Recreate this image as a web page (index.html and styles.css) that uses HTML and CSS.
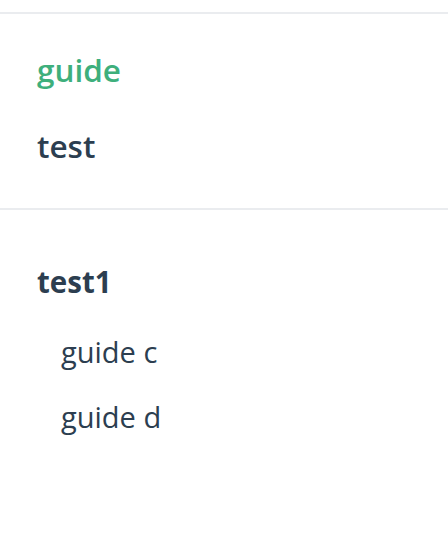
FILE: index.html
```html
<!DOCTYPE html>
<html>
<head>
<meta charset="utf-8">
<link rel="stylesheet" href="styles.css">
</head>
<body>
<aside class="sidebar">
  <nav class="nav-links">
    <a class="nav-item active" href="#">guide</a>
    <a class="nav-item" href="#">test</a>
  </nav>
  <section class="sidebar-group">
    <p class="group-heading">test1</p>
    <ul class="group-items">
      <li><a class="sidebar-link" href="#">guide c</a></li>
      <li><a class="sidebar-link" href="#">guide d</a></li>
    </ul>
  </section>
</aside>
</body>
</html>
```
FILE: styles.css
```css
html, body {
  margin: 0;
  padding: 0;
  background: #ffffff;
}
body {
  font-family: "Open Sans", "Noto Sans", sans-serif;
  color: #2c3e50;
}
.sidebar {
  padding-top: 12px;
}
.nav-links {
  display: flex;
  flex-direction: column;
  border-top: 2px solid #eaecef;
  border-bottom: 2px solid #eaecef;
  padding: 18px 0 24px 37px;
}
.nav-item {
  display: block;
  font-size: 31.5px;
  line-height: 76px;
  font-weight: 600;
  color: #2c3e50;
  text-decoration: none;
}
.nav-item.active {
  color: #3eaf7c;
}
.sidebar-group {
  padding: 39px 0 0 0;
}
.group-heading {
  margin: 0;
  padding-left: 37px;
  font-size: 29.5px;
  line-height: 66px;
  font-weight: 700;
}
.group-items {
  list-style: none;
  margin: 4px 0 0 0;
  padding: 0;
}
.sidebar-link {
  display: block;
  padding-left: 61px;
  font-size: 29px;
  line-height: 65px;
  color: #2c3e50;
  text-decoration: none;
}
```
